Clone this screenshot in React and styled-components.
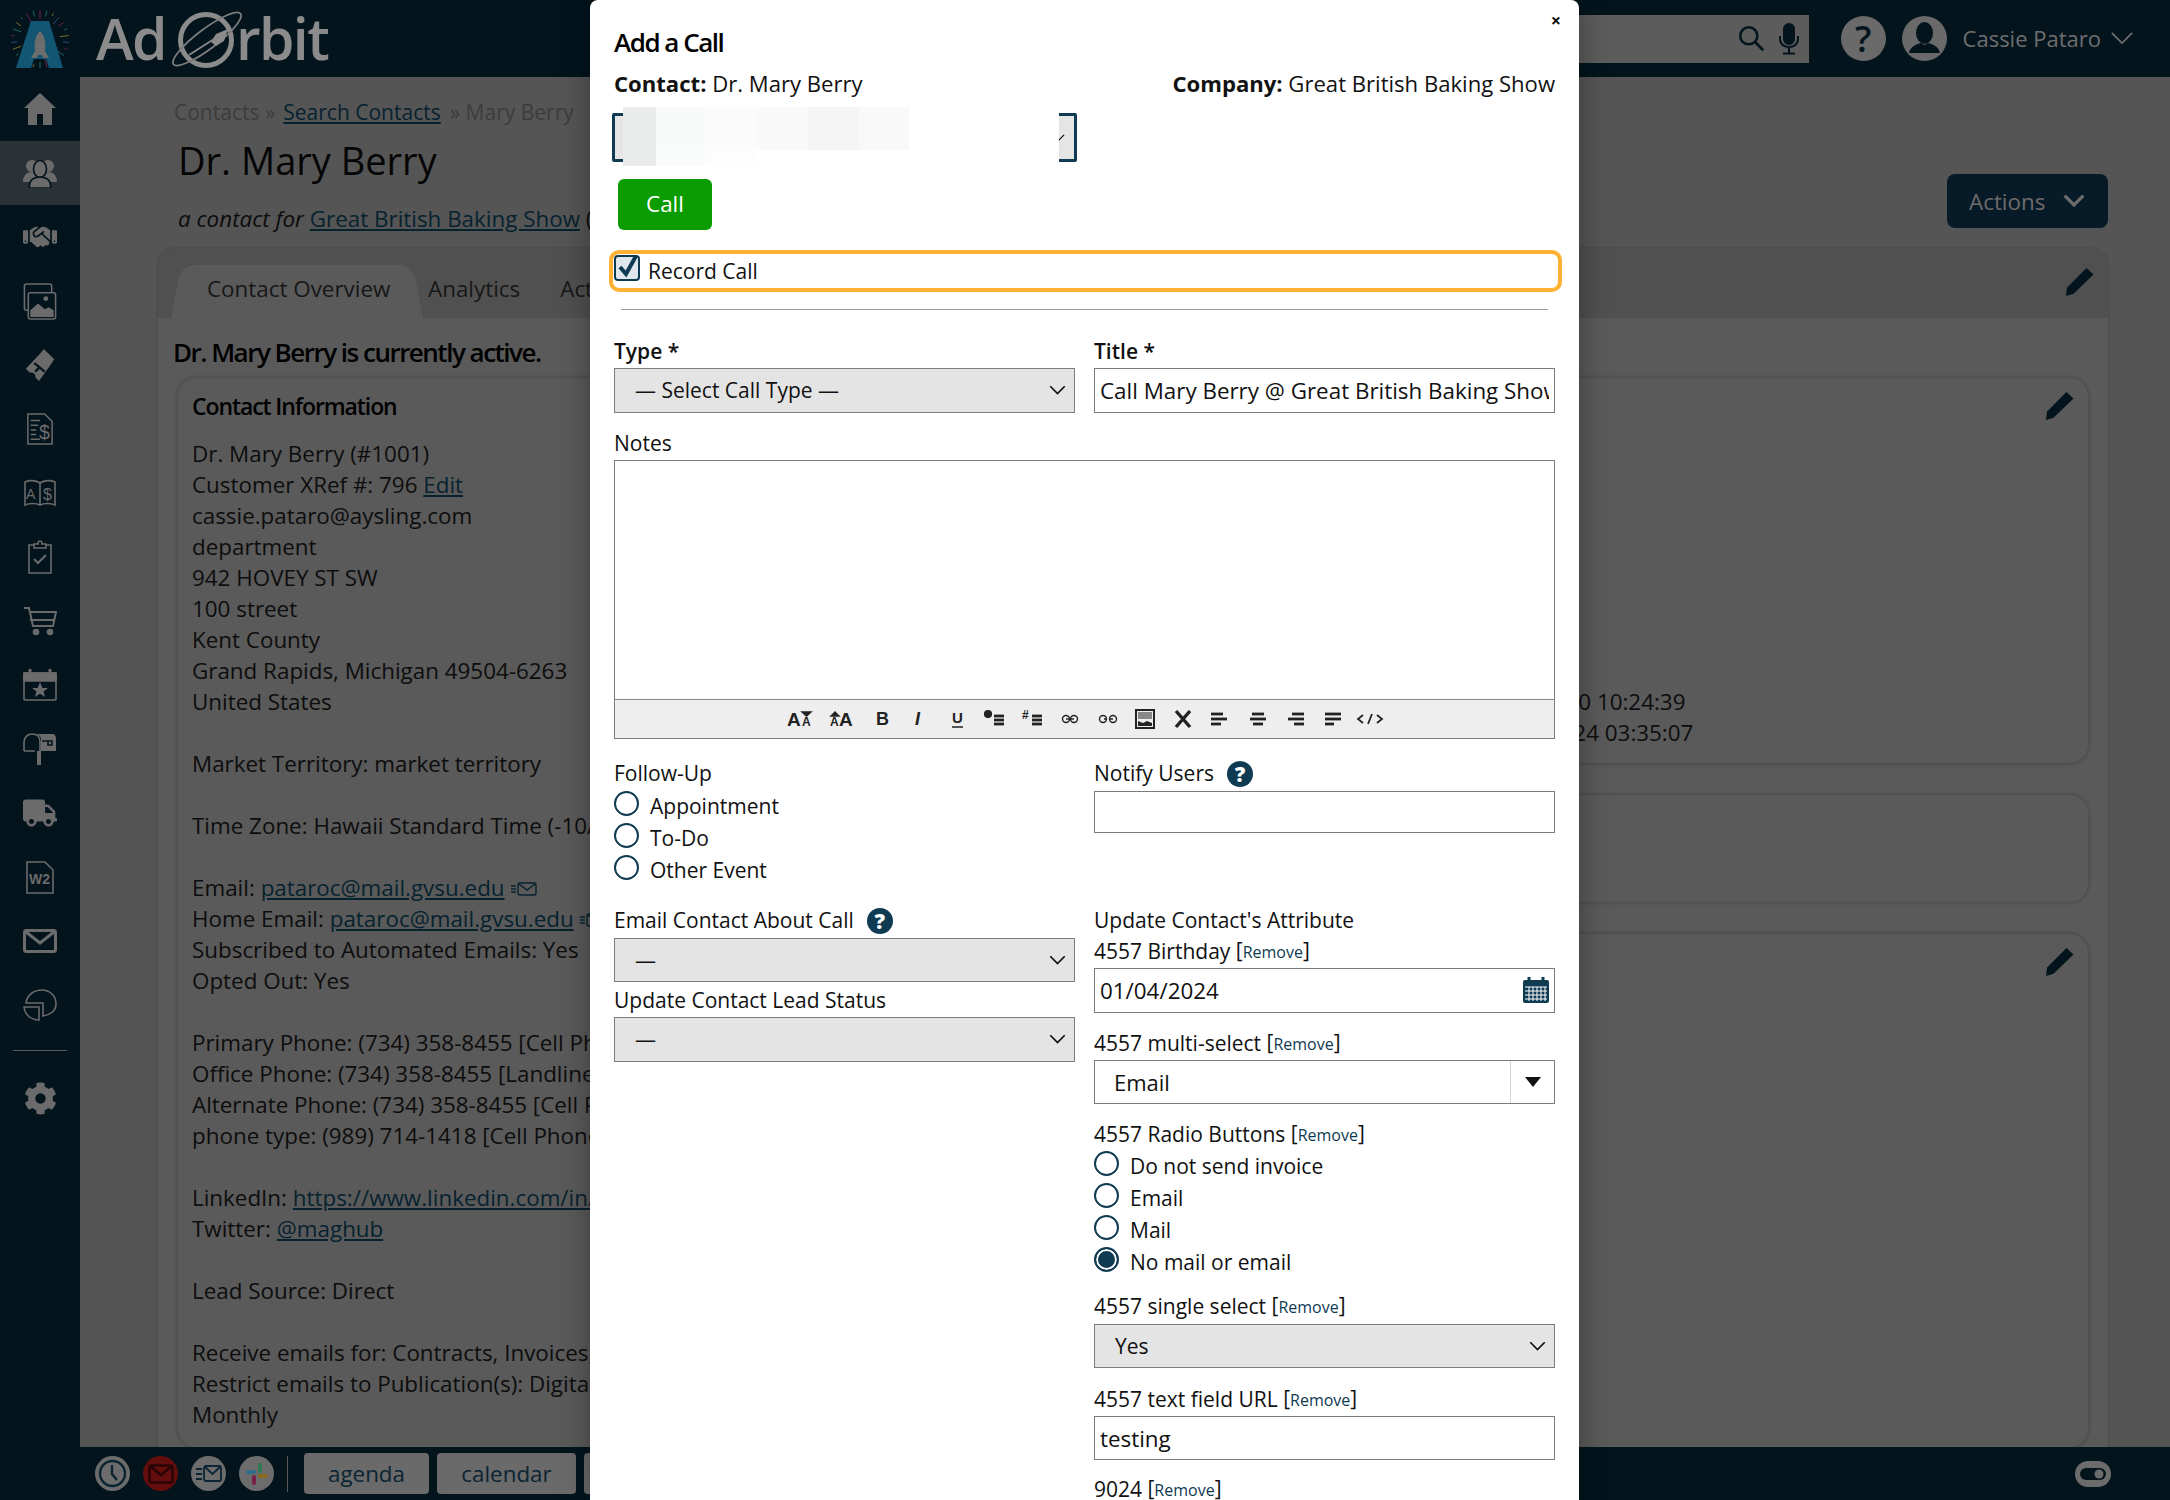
import React from 'react';
import styled, { createGlobalStyle } from 'styled-components';
import { FaTruck, FaCog } from 'react-icons/fa';
import { FaHandshake } from 'react-icons/fa6';

const navy = '#0e3a52';
const font = '"Open Sans", "Noto Sans", sans-serif';

const Global = createGlobalStyle`
  html, body { margin: 0; padding: 0; background: #555; }
  * { box-sizing: border-box; }
  #root { font-family: ${font}; font-size: 22.4px; line-height: 31px; color: #000; }
`;

const Page = styled.div`
  position: relative;
  display: grid;
  grid-template-columns: 80px 1fr;
  grid-template-rows: 77px 1fr 53px;
  width: 2170px;
  height: 1500px;
  overflow: hidden;
`;

/* top bar */
const TopBar = styled.header`
  grid-column: 1 / 3;
  display: flex;
  align-items: center;
  background: #03141d;
`;
const LogoMark = styled.div`
  width: 80px;
  display: flex;
  justify-content: center;
`;
const LogoWord = styled.div`
  display: flex;
  align-items: center;
  margin-left: 16px;
  font-size: 57px;
  line-height: 77px;
  font-weight: 600;
  color: #8b8b8b;
  letter-spacing: -1.6px;
  svg { margin: 0 -6px 0 6px; }
`;
const Spacer = styled.div`
  flex: 1;
`;
const SearchBox = styled.div`
  display: flex;
  align-items: center;
  justify-content: flex-end;
  gap: 14px;
  width: 400px;
  height: 48px;
  padding-right: 10px;
  background: #5c5c5c;
`;
const RoundIcon = styled.div`
  width: 45px;
  height: 45px;
  border-radius: 50%;
  background: #6a6a6a;
  color: #03141d;
  display: flex;
  align-items: center;
  justify-content: center;
  overflow: hidden;
  font-size: 36px;
  font-weight: 600;
  margin-left: ${p => p.$gap || 0}px;
`;
const UserName = styled.div`
  margin-left: 16px;
  color: #6e6e6e;
  font-size: 22px;
  white-space: nowrap;
`;
const UserMenu = styled.div`
  display: flex;
  align-items: center;
  margin-right: 36px;
  svg { margin-left: 9px; }
`;

/* side nav */
const Sidebar = styled.nav`
  grid-row: 2 / 4;
  background: #03141d;
  display: flex;
  flex-direction: column;
`;
const NavItem = styled.div`
  height: 64px;
  flex: none;
  display: flex;
  align-items: center;
  justify-content: center;
  color: #6b6b6b;
  background: ${p => (p.$active ? '#2b3237' : 'transparent')};
`;
const NavRule = styled.div`
  height: 1px;
  margin: 13px 13px 15px;
  background: #565c60;
`;

/* page behind the dialog */
const Main = styled.main`
  background: #555;
  display: flex;
  flex-direction: column;
  overflow: hidden;
  min-width: 0;
`;
const PageHead = styled.div`
  display: flex;
  justify-content: space-between;
  padding: 20px 62px 0 94px;
`;
const Crumbs = styled.div`
  color: #3c3c3c;
  font-size: 21px;
  white-space: nowrap;
  a { margin: 0 9px 0 8px; }
`;
const Link = styled.a`
  color: #07222f;
  text-decoration: underline;
`;
const PageTitle = styled.h1`
  margin: 6px 0 17px 4px;
  font-size: 38px;
  line-height: 52px;
  font-weight: 400;
  color: #050505;
`;
const Subtitle = styled.div`
  margin-left: 4px;
  white-space: nowrap;
  color: #0c0c0c;
  em { font-style: italic; }
`;
const ActionsButton = styled.div`
  display: flex;
  align-items: center;
  width: 161px;
  height: 54px;
  margin-top: 77px;
  padding-left: 22px;
  gap: 18px;
  border-radius: 8px;
  background: #071a27;
  color: #6c6c6c;
`;
const Panel = styled.section`
  flex: 1;
  margin: 14px 62px 0 78px;
  border-radius: 18px 18px 0 0;
  background: #5a5a5a;
  box-shadow: 0 0 3px rgba(0, 0, 0, 0.25);
  display: flex;
  flex-direction: column;
`;
const TabStrip = styled.div`
  position: relative;
  height: 70px;
  display: flex;
  align-items: flex-end;
  padding-left: 13px;
  border-radius: 18px 18px 0 0;
  background: #505050;
`;
const ActiveTab = styled.div`
  width: 252px;
  height: 53px;
  padding: 8px 0 0 36px;
  background: #5a5a5a;
  clip-path: path('M0 53 L7 16 Q 10 0 26 0 L226 0 Q 242 0 245 16 L252 53 Z');
  color: #171717;
  white-space: nowrap;
`;
const Tab = styled.div`
  height: 53px;
  padding-top: 8px;
  margin-left: ${p => p.$gap}px;
  color: #171717;
`;
const StatusLine = styled.div`
  margin: 17px 0 9px 15px;
  font-size: 26px;
  line-height: 34px;
  font-weight: 600;
  letter-spacing: -1.5px;
  color: #000;
  white-space: nowrap;
`;
const Columns = styled.div`
  flex: 1;
  display: grid;
  grid-template-columns: 1fr 724px;
  gap: 20px;
  padding: 0 20px;
`;
const Stack = styled.div`
  display: flex;
  flex-direction: column;
  gap: 32px;
`;
const Card = styled.div`
  position: relative;
  display: flex;
  flex-direction: column;
  height: ${p => (p.$h ? `${p.$h}px` : 'auto')};
  flex: ${p => (p.$h ? 'none' : 1)};
  padding: 12px 14px 15px;
  border-radius: 18px;
  background: #5a5a5a;
  box-shadow: 0 0 4px rgba(0, 0, 0, 0.3);
  justify-content: ${p => (p.$end ? 'flex-end' : 'flex-start')};
  overflow: hidden;
`;
const CardTitle = styled.div`
  margin-bottom: 16px;
  font-size: 23px;
  line-height: 32px;
  font-weight: 600;
  letter-spacing: -1.1px;
`;
const Line = styled.div`
  min-height: 31px;
  white-space: nowrap;
  color: #0d0d0d;
`;
const PencilSpot = styled.div`
  position: absolute;
  right: ${p => p.$right}px;
  top: ${p => p.$top}px;
  color: #03141d;
`;

/* bottom bar */
const BottomBar = styled.footer`
  display: flex;
  align-items: center;
  padding-left: 15px;
  background: #03141d;
  z-index: 1;
`;
const DockCircle = styled.div`
  width: 35px;
  height: 35px;
  margin-right: 13px;
  border-radius: 50%;
  background: ${p => p.$bg || '#6c6c6c'};
  display: flex;
  align-items: center;
  justify-content: center;
`;
const DockRule = styled.div`
  width: 1px;
  height: 36px;
  margin: 0 16px 0 0;
  background: #5a5a5a;
`;
const DockButton = styled.div`
  width: ${p => p.$w}px;
  height: 41px;
  flex: none;
  margin-right: 8px;
  border-radius: 4px;
  background: #6a6a6a;
  color: #0b2433;
  text-align: center;
  line-height: 41px;
`;

/* dialog */
const Modal = styled.div`
  position: absolute;
  left: 590px;
  top: 0;
  width: 989px;
  height: 1500px;
  padding: 25px 24px 0;
  background: #fff;
  border-radius: 8px 8px 0 0;
  overflow: hidden;
  z-index: 10;
  box-shadow: 0 0 30px rgba(0, 0, 0, 0.35);
  color: #111;
`;
const CloseMark = styled.div`
  position: absolute;
  top: 6px;
  right: 18px;
  font-size: 18px;
  font-weight: 700;
  line-height: 28px;
`;
const ModalTitle = styled.h2`
  margin: 0;
  font-size: 26px;
  line-height: 34px;
  font-weight: 600;
  letter-spacing: -1.5px;
  color: #000;
`;
const MetaRow = styled.div`
  display: flex;
  justify-content: space-between;
  margin-top: 9px;
  font-size: 22.1px;
  b { font-weight: 700; }
`;
const RedactedWrap = styled.div`
  position: relative;
  width: 465px;
  height: 49px;
  margin: 14px 0 0 -2px;
  border: 3px solid ${navy};
  border-radius: 2px;
  background: #e5e5e5;
  display: flex;
  align-items: center;
  justify-content: flex-end;
  padding-right: 9px;
`;
const RedactedBlur = styled.div`
  position: absolute;
  left: 8px;
  top: -9px;
  width: 436px;
  height: 59px;
  background:
    linear-gradient(90deg, #eaecec 0 33px, #f8f9f9 33px 82px, #fbfbfb 82px 135px, #f9f9f9 135px 185px, #f5f5f5 185px 236px, #f9f9f9 236px 286px, #fff 286px) top / 100% 43px no-repeat,
    linear-gradient(90deg, #eaecec 0 33px, #fafbfb 33px 82px, #fdfdfd 82px 135px, #fff 135px) bottom / 100% 16px no-repeat;
`;
const CallButton = styled.div`
  width: 94px;
  height: 51px;
  margin: 17px 0 0 4px;
  border-radius: 6px;
  background: #0a9c00;
  color: #fff;
  text-align: center;
  line-height: 49px;
`;
const RecordRow = styled.label`
  display: flex;
  align-items: center;
  gap: 8px;
  height: 42px;
  margin: 20px -7px 0 -5px;
  padding-left: 5px;
  border: 4px solid #ffb133;
  border-radius: 10px;
  font-size: 21px;
`;
const CheckBox = styled.span`
  position: relative;
  width: 26px;
  height: 26px;
  margin: -7px 0 0 -4px;
  flex: none;
  border: 2px solid ${navy};
  border-radius: 4px;
  background: #dfe7ec;
  display: block;
  svg { position: absolute; left: 0; top: -3px; }
`;
const Rule = styled.hr`
  margin: 17px 7px 0;
  height: 1px;
  border: 0;
  background: #9a9a9a;
`;
const TwoCol = styled.div`
  display: grid;
  grid-template-columns: 461px 461px;
  column-gap: 19px;
  margin-top: ${p => p.$top}px;
`;
const FieldCol = styled.div`
  display: flex;
  flex-direction: column;
  min-width: 0;
`;
const Label = styled.div`
  display: flex;
  align-items: center;
  height: 31px;
  font-size: 21px;
  font-weight: ${p => (p.$strong ? 600 : 400)};
  margin-top: ${p => p.$top || 0}px;
  margin-bottom: ${p => p.$bottom || 0}px;
  white-space: pre;
`;
const RemoveNote = styled.span`
  small { font-size: 16px; color: ${navy}; }
`;
const HelpDot = styled.span`
  width: 26px;
  height: 26px;
  margin-left: ${p => p.$gap}px;
  border-radius: 50%;
  background: ${navy};
  color: #fff;
  font-size: 21px;
  font-weight: 800;
  line-height: 26px;
  text-align: center;
  flex: none;
`;
const SelectBox = styled.div`
  display: flex;
  align-items: center;
  justify-content: space-between;
  height: ${p => p.$h || 45}px;
  padding: 0 8px 0 20px;
  border: 1px solid #7c7c7c;
  background: #e4e4e4;
  font-size: 21px;
`;
const TextInput = styled.input`
  display: block;
  width: 100%;
  height: ${p => p.$h || 45}px;
  padding: 0 5px;
  border: 1px solid #7c7c7c;
  border-radius: 0;
  outline: 0;
  background: #fff;
  color: #111;
  font: 22.4px ${font};
`;
const DateField = styled.div`
  position: relative;
  svg { position: absolute; right: 6px; top: 9px; }
`;
const MultiSelect = styled.div`
  display: flex;
  align-items: center;
  height: 44px;
  padding-left: 19px;
  border: 1px solid #7c7c7c;
  font-size: 22px;
`;
const MultiArrow = styled.div`
  width: 44px;
  height: 100%;
  margin-left: auto;
  border-left: 1px solid #d4d4d4;
  display: flex;
  align-items: center;
  justify-content: center;
`;
const Editor = styled.div`
  border: 1px solid #7c7c7c;
`;
const NotesArea = styled.textarea`
  display: block;
  width: 100%;
  height: 238px;
  border: 0;
  outline: 0;
  resize: none;
`;
const EditorTools = styled.div`
  height: 39px;
  display: flex;
  align-items: center;
  justify-content: center;
  border-top: 1px solid #888;
  background: #eee;
`;
const ToolSlot = styled.span`
  width: ${p => p.$w}px;
  display: flex;
  justify-content: center;
`;
const RadioRow = styled.label`
  display: flex;
  align-items: center;
  gap: 11px;
  height: 32px;
  font-size: 21px;
  white-space: nowrap;
`;
const Radio = styled.input.attrs({ type: 'radio' })`
  appearance: none;
  width: 25px;
  height: 25px;
  margin: -5px 0 0 0;
  flex: none;
  border: 2px solid ${navy};
  border-radius: 50%;
  background: #fff;
  &:checked {
    background: ${navy};
    box-shadow: inset 0 0 0 2px #fff;
  }
`;

const Chevron = ({ w = 17, sw = 2, color = '#111' }) => (
  <svg width={w} height={w * 0.6} viewBox="0 0 20 12" fill="none" stroke={color} strokeWidth={sw}>
    <path d="M1.5 1.5 L10 10 L18.5 1.5" />
  </svg>
);

const Pencil = ({ size = 28 }) => (
  <svg width={size} height={size} viewBox="0 0 26 26" fill="currentColor">
    <path d="M19 0 L25.5 6 L7 24 L0 26 L1 18 Z" />
  </svg>
);

const Icon = ({ children, w = 34, h = 34, vb }) => (
  <svg width={w} height={h} viewBox={vb || `0 0 ${w} ${h}`} fill="none" stroke="currentColor" strokeWidth="1.6">
    {children}
  </svg>
);

const fireworks = Array.from({ length: 26 }, (_, i) => {
  const a = (Math.PI * 2 * i) / 26 - Math.PI / 2;
  const colors = ['#6b1f4a', '#1c6a66', '#75702a', '#2a4f7a'];
  return { a, c: colors[i % 4], r: 20 + (i % 3) * 3 };
});

const RocketLogo = () => (
  <svg width="60" height="60" viewBox="0 0 60 60">
    {fireworks.map(f => (
      <line
        key={f.a}
        x1={30 + Math.cos(f.a) * f.r}
        y1={30 + Math.sin(f.a) * f.r}
        x2={30 + Math.cos(f.a) * 29}
        y2={30 + Math.sin(f.a) * 29}
        stroke={f.c}
        strokeWidth="1"
      />
    ))}
    <path d="M21 12 H39 L53 59 H39 L36 50 H24 L21 59 H6 Z" fill="#135674" />
    <path d="M30 22 C35 27 36 34 35 42 L39 49 H33 L32 46 H28 L27 49 H21 L25 42 C24 34 25 27 30 22 Z" fill="#6d6d6d" />
  </svg>
);

const OrbitO = () => (
  <svg width="70" height="60" viewBox="0 0 70 60" fill="none" stroke="#8b8b8b">
    <circle cx="34" cy="31" r="25.5" strokeWidth="5" />
    <ellipse cx="35" cy="30" rx="42" ry="10" strokeWidth="1.8" transform="rotate(-37 35 30)" stroke="#7d7d7d" />
    <path d="M17 46 L42 30" strokeWidth="1.6" />
    <path d="M39 33 L44 25 L56 20 L52 32 L44 37 Z" fill="#8b8b8b" stroke="none" />
  </svg>
);

const navIcons = [
  <Icon w={32} h={34}>
    <path d="M16 1 L32 16 H28 V33 H19 V22 H13 V33 H4 V16 H0 Z" fill="currentColor" stroke="none" />
  </Icon>,
  <Icon w={34} h={30}>
    <circle cx="9" cy="8" r="6" fill="currentColor" stroke="none" />
    <circle cx="25" cy="8" r="6" fill="currentColor" stroke="none" />
    <path d="M0 24 C0 17 4 14 9 14 C14 14 18 17 18 24 Z M16 24 C16 17 20 14 25 14 C30 14 34 17 34 24 Z" fill="currentColor" stroke="none" />
    <ellipse cx="17" cy="11" rx="6.5" ry="8.5" fill="currentColor" stroke="#03141d" />
    <path d="M6 30 C6 22 11 19 17 19 C23 19 28 22 28 30 Z" fill="currentColor" stroke="#03141d" />
  </Icon>,
  <FaHandshake size={34} />,
  <Icon vb="0 0 34 38" h={37}>
    <rect x="1" y="1" width="28" height="27" rx="2" />
    <rect x="5" y="10" width="28" height="27" rx="2" fill="#03141d" />
    <path d="M7 35 V28 L15 21 L22 27 L26 25 L31 28 V35 Z" fill="currentColor" stroke="none" />
    <circle cx="23" cy="16" r="2.5" fill="currentColor" stroke="none" />
  </Icon>,
  <Icon vb="0 0 34 38" h={36}>
    <path d="M21 2 L32 13 C30 15 30 17 28 19 L16 36 L12 32 C13 29 10 26 6 27 L2 23 L18 6 Z" fill="currentColor" stroke="none" />
    <path d="M11 17 L22 26 M17 21 L12 26" stroke="#03141d" strokeWidth="2.5" />
  </Icon>,
  <Icon vb="0 0 30 36" w={28} h={36}>
    <path d="M2 2 H20 L28 10 V34 H2 Z" />
    <path d="M5 9 H15 M5 14 H13 M5 19 H11 M5 24 H11 M5 29 H15" />
    <text x="14" y="29" fontSize="21" fill="currentColor" stroke="none" fontFamily="Liberation Sans">$</text>
  </Icon>,
  <Icon vb="0 0 34 28" h={28}>
    <path d="M17 4 C13 1 6 1 2 3 V26 C6 24 13 24 17 26 C21 24 28 24 32 26 V3 C28 1 21 1 17 4 Z M17 4 V26" />
    <text x="3" y="20" fontSize="14" fill="currentColor" stroke="none" fontFamily="Liberation Sans">A</text>
    <text x="20" y="21" fontSize="16" fill="currentColor" stroke="none" fontFamily="Liberation Sans">$</text>
  </Icon>,
  <Icon w={26} h={34}>
    <path d="M7 5 H2 V33 H24 V5 H19" />
    <path d="M7 8 V4 H11 C11 0 15 0 15 4 H19 V8 Z" />
    <path d="M7 19 L11 23 L19 15" strokeWidth="2" />
  </Icon>,
  <Icon w={34} h={30}>
    <path d="M1 2 H6 L10 20 H30 L33 6 H8 M7 14 H32" strokeWidth="2" />
    <circle cx="13" cy="26" r="2.5" fill="currentColor" />
    <circle cx="27" cy="26" r="2.5" fill="currentColor" />
  </Icon>,
  <Icon w={34} h={32}>
    <path d="M1 4 H33 V12 H1 Z" fill="currentColor" />
    <path d="M7 0 V5 M27 0 V5" strokeWidth="3" />
    <rect x="1" y="4" width="32" height="27" rx="1" />
    <path d="M17 13 L19.3 19 H25 L20.5 22.5 L22.2 28 L17 24.8 L11.8 28 L13.5 22.5 L9 19 H14.7 Z" fill="currentColor" stroke="none" />
  </Icon>,
  <Icon w={34} h={32}>
    <path d="M11 1 H29 C32 1 33 3 33 6 V18 H18 V32 H14 V18 H18 V6 C18 3 15 1 11 1 Z" fill="currentColor" stroke="none" />
    <path d="M1 18 V9 C1 4 5 1 9 1 C14 1 17 4 17 9 V18 M1 18 H12" />
    <path d="M19 8 H29 V12 H25 V8" stroke="#03141d" />
  </Icon>,
  <FaTruck size={34} />,
  <Icon w={28} h={33} vb="0 0 28 33">
    <path d="M1 1 H19 L27 9 V32 H1 Z" />
    <text x="3" y="23" fontSize="14" fontWeight="700" fill="currentColor" stroke="none" fontFamily="Liberation Sans">W2</text>
  </Icon>,
  <Icon w={34} h={24}>
    <rect x="1.5" y="1.5" width="31" height="21" rx="2" strokeWidth="3" />
    <path d="M3 3 L17 14 L31 3" strokeWidth="3" />
  </Icon>,
  <Icon w={34} h={32}>
    <path d="M3 14 C4 6 11 1 19 1 C27 1 33 7 33 15 C33 22 27 26 20 27 V14 Z" />
    <path d="M1 18 H16 V31 C8 31 2 26 1 18 Z" />
  </Icon>,
];

const toolText = { fontFamily: 'Liberation Sans', fontWeight: 700, fill: '#222', stroke: 'none' };
const barLines = rows => rows.map(([x1, x2, y]) => <path key={y} d={`M${x1} ${y} H${x2}`} strokeWidth="2.8" />);
const ToolSvg = ({ children, w = 24 }) => (
  <svg width={w} height="20" viewBox={`0 0 ${w} 20`} fill="none" stroke="#222" strokeWidth="1.4">
    {children}
  </svg>
);
const tools = [
  <ToolSvg w={28}><text x="0" y="17" fontSize="19" {...toolText}>A</text><text x="15" y="17" fontSize="12" {...toolText}>A</text><path d="M15 3 H24 L19.5 7 Z" fill="#222" /></ToolSvg>,
  <ToolSvg w={28}><text x="1" y="17" fontSize="12" {...toolText}>A</text><text x="10" y="17" fontSize="19" {...toolText}>A</text><path d="M2 7 H10 L6 3 Z" fill="#222" /></ToolSvg>,
  <ToolSvg><text x="5" y="16" fontSize="18" stroke="#222" {...toolText}>B</text></ToolSvg>,
  <ToolSvg><text x="7" y="16" fontSize="18" fontStyle="italic" {...toolText}>I</text></ToolSvg>,
  <ToolSvg><text x="6" y="14" fontSize="15" {...toolText}>U</text><path d="M6 18 H17" strokeWidth="1.5" /></ToolSvg>,
  <ToolSvg><circle cx="5" cy="5" r="3.4" fill="#222" />{barLines([[11, 21, 7], [11, 21, 11], [11, 21, 15]])}</ToolSvg>,
  <ToolSvg><text x="1" y="10" fontSize="12" {...toolText}>#</text>{barLines([[11, 21, 7], [11, 21, 11], [11, 21, 15]])}</ToolSvg>,
  <ToolSvg><circle cx="8" cy="10" r="3.5" /><circle cx="16" cy="10" r="3.5" /><path d="M8 10 H16" /></ToolSvg>,
  <ToolSvg><circle cx="7" cy="10" r="3.5" /><circle cx="17" cy="10" r="3.5" /><path d="M8 10 H10 M14 10 H17" /></ToolSvg>,
  <ToolSvg w={20}><rect x="1" y="1" width="18" height="18" strokeWidth="2" /><rect x="3" y="3" width="14" height="7" fill="#888" stroke="none" /><path d="M3 17 V12 L8 14 L12 12 L17 14 V17 Z" fill="#222" stroke="none" /></ToolSvg>,
  <ToolSvg><path d="M5 2 L19 18 M19 2 L5 18" strokeWidth="3.4" /></ToolSvg>,
  <ToolSvg>{barLines([[3, 15, 5], [3, 19, 10], [3, 13, 15]])}</ToolSvg>,
  <ToolSvg>{barLines([[6, 18, 5], [4, 20, 10], [7, 17, 15]])}</ToolSvg>,
  <ToolSvg>{barLines([[9, 21, 5], [5, 21, 10], [11, 21, 15]])}</ToolSvg>,
  <ToolSvg>{barLines([[4, 20, 5], [4, 20, 10], [4, 13, 15]])}</ToolSvg>,
  <ToolSvg w={28}><path d="M7 6 L2 10 L7 14 M21 6 L26 10 L21 14 M16 5 L12 15" strokeWidth="1.8" /></ToolSvg>,
];

const linkLine = (before, link, after) => (
  <>{before}<Link>{link}</Link>{after}</>
);

function MailGlyph() {
  return (
    <svg width="26" height="14" viewBox="0 0 26 14" fill="none" stroke="#07222f" strokeWidth="1.4" style={{ marginLeft: 6 }}>
      <path d="M0 4 H5 M0 7 H5 M0 10 H5" />
      <rect x="7" y="1" width="18" height="12" rx="2" />
      <path d="M8 2 L16 8 L24 2" />
    </svg>
  );
}

const contactLines = [
  'Dr. Mary Berry (#1001)',
  linkLine('Customer XRef #: 796 ', 'Edit'),
  'cassie.pataro@aysling.com',
  'department',
  '942 HOVEY ST SW',
  '100 street',
  'Kent County',
  'Grand Rapids, Michigan 49504-6263',
  'United States',
  '',
  'Market Territory: market territory',
  '',
  'Time Zone: Hawaii Standard Time (-10/-10)',
  '',
  linkLine('Email: ', 'pataroc@mail.gvsu.edu', <MailGlyph />),
  linkLine('Home Email: ', 'pataroc@mail.gvsu.edu', <MailGlyph />),
  'Subscribed to Automated Emails: Yes',
  'Opted Out: Yes',
  '',
  'Primary Phone: (734) 358-8455 [Cell Phone]',
  'Office Phone: (734) 358-8455 [Landline]',
  'Alternate Phone: (734) 358-8455 [Cell Phone]',
  'phone type: (989) 714-1418 [Cell Phone]',
  '',
  linkLine('LinkedIn: ', 'https://www.linkedin.com/in/maghub'),
  linkLine('Twitter: ', '@maghub'),
  '',
  'Lead Source: Direct',
  '',
  'Receive emails for: Contracts, Invoices, Newsletters',
  'Restrict emails to Publication(s): Digital Monthly,',
  'Monthly',
];

const Remove = () => (
  <RemoveNote>[<small>Remove</small>]</RemoveNote>
);

const RadioOption = ({ label, checked, name }) => (
  <RadioRow>
    <Radio name={name} defaultChecked={checked} />
    {label}
  </RadioRow>
);

const Select = ({ value, h }) => (
  <SelectBox $h={h}>
    {value}
    <Chevron />
  </SelectBox>
);

export default function App() {
  return (
    <Page>
      <Global />
      <TopBar>
        <LogoMark><RocketLogo /></LogoMark>
        <LogoWord>Ad<OrbitO />rbit</LogoWord>
        <Spacer />
        <SearchBox>
          <svg width="27" height="27" viewBox="0 0 30 30" fill="none" stroke="#03141d" strokeWidth="2.8">
            <circle cx="12" cy="12" r="9.5" />
            <path d="M19 19 L28 28" strokeWidth="3.2" />
          </svg>
          <svg width="20" height="32" viewBox="0 0 20 32" fill="none" stroke="#03141d" strokeWidth="2">
            <rect x="5" y="1" width="10" height="20" rx="5" fill="#03141d" />
            <path d="M1 13 V16 C1 21 5 24 10 24 C15 24 19 21 19 16 V13 M10 24 V30 M4 30.5 H16" />
          </svg>
        </SearchBox>
        <RoundIcon $gap={32}>?</RoundIcon>
        <RoundIcon $gap={16}>
          <svg width="45" height="45" viewBox="0 0 45 45" fill="#03141d">
            <ellipse cx="22.5" cy="17" rx="8.5" ry="11" />
            <path d="M7 37 C8 31 14 28 19 27 L22.5 29 L26 27 C31 28 37 31 38 37 Z" />
          </svg>
        </RoundIcon>
        <UserMenu>
          <UserName>Cassie Pataro</UserName>
          <Chevron w={24} sw={1.4} color="#6e6e6e" />
        </UserMenu>
      </TopBar>

      <Sidebar>
        {navIcons.map((icon, i) => (
          <NavItem key={i} $active={i === 1}>{icon}</NavItem>
        ))}
        <NavRule />
        <NavItem><FaCog size={33} /></NavItem>
      </Sidebar>

      <Main>
        <PageHead>
          <div>
            <Crumbs>Contacts »<Link>Search Contacts</Link>» Mary Berry</Crumbs>
            <PageTitle>Dr. Mary Berry</PageTitle>
            <Subtitle><em>a contact for</em> <Link>Great British Baking Show</Link> (#1001)</Subtitle>
          </div>
          <ActionsButton>
            Actions
            <Chevron w={22} sw={3} color="#6c6c6c" />
          </ActionsButton>
        </PageHead>
        <Panel>
          <TabStrip>
            <ActiveTab>Contact Overview</ActiveTab>
            <Tab $gap={5}>Analytics</Tab>
            <Tab $gap={40}>Activity</Tab>
            <PencilSpot $right={14} $top={20}><Pencil /></PencilSpot>
          </TabStrip>
          <StatusLine>Dr. Mary Berry is currently active.</StatusLine>
          <Columns>
            <Card>
              <CardTitle>Contact Information</CardTitle>
              {contactLines.map((line, i) => <Line key={i}>{line}</Line>)}
            </Card>
            <Stack>
              <Card $h={385} $end>
                <PencilSpot $right={14} $top={14}><Pencil /></PencilSpot>
                <Line>Created: 03/10/2020 10:24:39</Line>
                <Line>Updated: 01/04/2024 03:35:07</Line>
              </Card>
              <Card $h={107} />
              <Card>
                <PencilSpot $right={14} $top={14}><Pencil /></PencilSpot>
              </Card>
            </Stack>
          </Columns>
        </Panel>
      </Main>

      <BottomBar>
        <DockCircle>
          <svg width="29" height="29" viewBox="0 0 29 29" fill="none" stroke="#0b2433" strokeWidth="2.4">
            <circle cx="14.5" cy="14.5" r="12.5" />
            <path d="M14 6 V15 L19 21" />
          </svg>
        </DockCircle>
        <DockCircle $bg="#640d0d">
          <svg width="26" height="20" viewBox="0 0 26 20" fill="none" stroke="#2a0505" strokeWidth="2.6">
            <rect x="1.5" y="1.5" width="23" height="17" rx="2" />
            <path d="M2 2 L13 11 L24 2" />
          </svg>
        </DockCircle>
        <DockCircle>
          <svg width="26" height="18" viewBox="0 0 26 18" fill="none" stroke="#0b2433" strokeWidth="1.8">
            <path d="M0 4 H6 M0 9 H6 M0 14 H6" />
            <rect x="8" y="1" width="17" height="15" rx="2" />
            <path d="M9 2 L16.5 9 L24 2" />
          </svg>
        </DockCircle>
        <DockCircle>
          <svg width="22" height="22" viewBox="0 0 22 22" fill="none" strokeWidth="4" strokeLinecap="round">
            <path d="M2 9 H8" stroke="#2f6f8a" />
            <path d="M14 2 V8" stroke="#2f7a50" />
            <path d="M14 13 H20" stroke="#8a6a20" />
            <path d="M8 14 V20" stroke="#7a1f45" />
          </svg>
        </DockCircle>
        <DockRule />
        <DockButton $w={125}>agenda</DockButton>
        <DockButton $w={139}>calendar</DockButton>
        <DockButton $w={120}>tasks</DockButton>
        <Spacer />
        <svg width="36" height="26" viewBox="0 0 36 26" style={{ marginRight: 59 }}>
          <rect width="36" height="26" rx="13" fill="#6c6c6c" />
          <rect x="5" y="7" width="26" height="12" rx="6" fill="#03141d" />
          <circle cx="24" cy="13" r="4.5" fill="#6c6c6c" />
        </svg>
      </BottomBar>

      <Modal>
        <CloseMark>×</CloseMark>
        <ModalTitle>Add a Call</ModalTitle>
        <MetaRow>
          <span><b>Contact:</b> Dr. Mary Berry</span>
          <span><b>Company:</b> Great British Baking Show</span>
        </MetaRow>
        <RedactedWrap>
          <Chevron w={12} sw={2} />
          <RedactedBlur />
        </RedactedWrap>
        <CallButton>Call</CallButton>
        <RecordRow>
          <CheckBox>
            <svg width="24" height="26" viewBox="0 0 24 26" fill="none" stroke={navy} strokeWidth="4">
              <path d="M4 13 L10 20 L20 2" />
            </svg>
          </CheckBox>
          Record Call
        </RecordRow>
        <Rule />

        <TwoCol $top={26}>
          <FieldCol>
            <Label $strong $bottom={1}>Type *</Label>
            <Select value="— Select Call Type —" />
          </FieldCol>
          <FieldCol>
            <Label $strong $bottom={1}>Title *</Label>
            <TextInput readOnly defaultValue="Call Mary Berry @ Great British Baking Show" />
          </FieldCol>
        </TwoCol>

        <Label $top={15} $bottom={1}>Notes</Label>
        <Editor>
          <NotesArea readOnly />
          <EditorTools>
            {tools.map((t, i) => <ToolSlot key={i} $w={i < 2 ? 42 : 37.5}>{t}</ToolSlot>)}
          </EditorTools>
        </Editor>

        <TwoCol $top={19}>
          <FieldCol>
            <Label $bottom={1}>Follow-Up</Label>
            <RadioOption name="follow" label="Appointment" />
            <RadioOption name="follow" label="To-Do" />
            <RadioOption name="follow" label="Other Event" />
            <Label $top={19} $bottom={2}>
              Email Contact About Call
              <HelpDot $gap={13}>?</HelpDot>
            </Label>
            <Select value="—" h={44} />
            <Label $top={3} $bottom={1}>Update Contact Lead Status</Label>
            <Select value="—" />
          </FieldCol>
          <FieldCol>
            <Label $bottom={2}>
              Notify Users
              <HelpDot $gap={13}>?</HelpDot>
            </Label>
            <TextInput readOnly $h={42} />
            <Label $top={72}>Update Contact's Attribute</Label>
            <Label $bottom={1}>4557 Birthday <Remove /></Label>
            <DateField>
              <TextInput readOnly defaultValue="01/04/2024" />
              <svg width="26" height="26" viewBox="0 0 26 26">
                <rect x="0" y="3" width="26" height="23" rx="2" fill={navy} />
                <path d="M6 0 V5 M20 0 V5" stroke={navy} strokeWidth="3" />
                <path d="M2 10 H24 M2 14 H24 M2 18 H24 M2 22 H24 M6 10 V24 M10 10 V24 M14 10 V24 M18 10 V24 M22 10 V24" stroke="#fff" strokeWidth="1" />
              </svg>
            </DateField>
            <Label $top={15} $bottom={1}>4557 multi-select <Remove /></Label>
            <MultiSelect>
              Email
              <MultiArrow>
                <svg width="16" height="10" viewBox="0 0 16 10"><path d="M0 0 H16 L8 10 Z" fill="#111" /></svg>
              </MultiArrow>
            </MultiSelect>
            <Label $top={15}>4557 Radio Buttons <Remove /></Label>
            <RadioOption name="attr" label="Do not send invoice" />
            <RadioOption name="attr" label="Email" />
            <RadioOption name="attr" label="Mail" />
            <RadioOption name="attr" label="No mail or email" checked />
            <Label $top={13} $bottom={2}>4557 single select <Remove /></Label>
            <Select value="Yes" h={44} />
            <Label $top={16} $bottom={1}>4557 text field URL <Remove /></Label>
            <TextInput readOnly $h={44} defaultValue="testing" />
            <Label $top={14}>9024 <Remove /></Label>
          </FieldCol>
        </TwoCol>
      </Modal>
    </Page>
  );
}
